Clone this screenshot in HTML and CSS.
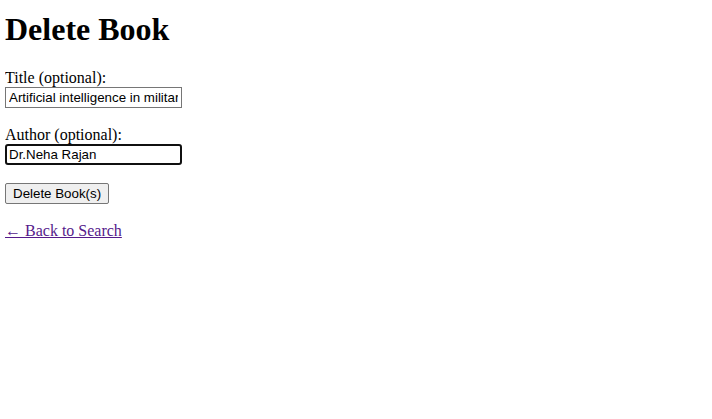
FILE: index.html
```html
<!DOCTYPE html>
<html>
<head>
<meta charset="utf-8">
<title>Delete Book</title>
<link rel="stylesheet" href="styles.css">
</head>
<body class="page">
<h1 class="title">Delete Book</h1>
<form class="form">
<label class="label">Title (optional):</label><br>
<input class="field" type="text" value="Artificial intelligence in military"><br><br>
<label class="label">Author (optional):</label><br>
<input class="field field-focus" type="text" value="Dr.Neha Rajan"><br><br>
<button class="btn" type="button">Delete Book(s)</button>
</form>
<br>
<a class="back" href="#">← Back to Search</a>
</body>
</html>
```
FILE: styles.css
```css
.page {
  margin: 5px;
  font-family: "Liberation Serif", "Times New Roman", serif;
  font-size: 16px;
  color: #000;
  background: #fff;
}
.title {
  font-size: 32px;
  font-weight: bold;
  margin: 6px 0 21px;
}
.form {
  margin: 0;
}
.field {
  font-family: "Liberation Sans", Arial, sans-serif;
  font-size: 13.33px;
  width: 177px;
  height: 21px;
  box-sizing: border-box;
  padding: 1px 3px;
  border: 1px solid #767676;
  border-radius: 0;
  margin: 0;
  color: #000;
  background: #fff;
}
.field-focus {
  border: 2px solid #101010;
  border-radius: 3px;
  padding: 0 2px;
  outline: none;
}
.btn {
  font-family: "Liberation Sans", Arial, sans-serif;
  font-size: 13.33px;
  height: 21px;
  padding: 1px 7px;
  border: 1px solid #767676;
  border-radius: 2px;
  background: #efefef;
  color: #000;
  margin: 0;
}
.back {
  color: #551a8b;
  text-decoration: underline;
}
```
